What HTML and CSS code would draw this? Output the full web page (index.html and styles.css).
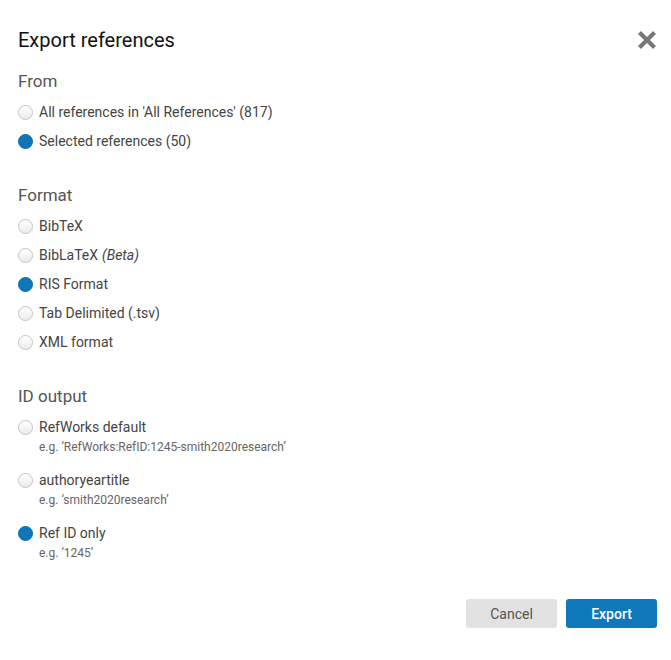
FILE: index.html
```html
<!DOCTYPE html>
<html lang="en">
<head>
  <meta charset="UTF-8">
  <title>Export references</title>
  <link rel="stylesheet" href="styles.css">
</head>
<body>

  <div class="dialog">
    <div class="dialog-header">
      <h2>Export references</h2>
      <button class="close-btn" aria-label="Close">
        <svg width="20" height="20" viewBox="0 0 20 20">
          <path d="M2.5 2.5 L17.5 17.5 M17.5 2.5 L2.5 17.5" stroke="#777" stroke-width="4.2" stroke-linecap="butt"/>
        </svg>
      </button>
    </div>

    <div class="section">
      <h3>From</h3>
      <label class="option"><input type="radio" name="from"> All references in 'All References' (817)</label>
      <label class="option"><input type="radio" name="from" checked> Selected references (50)</label>
    </div>

    <div class="section">
      <h3>Format</h3>
      <label class="option"><input type="radio" name="format"> BibTeX</label>
      <label class="option"><input type="radio" name="format"> BibLaTeX <em>(Beta)</em></label>
      <label class="option"><input type="radio" name="format" checked> RIS Format</label>
      <label class="option"><input type="radio" name="format"> Tab Delimited (.tsv)</label>
      <label class="option"><input type="radio" name="format"> XML format</label>
    </div>

    <div class="section">
      <h3>ID output</h3>
      <div class="option-group">
        <label class="option"><input type="radio" name="idout"> RefWorks default</label>
        <div class="hint">e.g. ‘RefWorks:RefID:1245-smith2020research’</div>
      </div>
      <div class="option-group">
        <label class="option"><input type="radio" name="idout"> authoryeartitle</label>
        <div class="hint">e.g. ‘smith2020research’</div>
      </div>
      <div class="option-group">
        <label class="option"><input type="radio" name="idout" checked> Ref ID only</label>
        <div class="hint">e.g. ‘1245’</div>
      </div>
    </div>

    <div class="dialog-footer">
      <button class="btn btn-cancel">Cancel</button>
      <button class="btn btn-primary">Export</button>
    </div>
  </div>

</body>
</html>
```

FILE: styles.css
```css
* {
  margin: 0;
  padding: 0;
  box-sizing: border-box;
  font-family: Roboto, 'Liberation Sans', sans-serif;
}

body {
  background: #ffffff;
}

.dialog {
  width: 671px;
  padding: 28px 14px 0 18px;
}

.dialog-header {
  display: flex;
  justify-content: space-between;
  align-items: center;
  height: 24px;
}

.dialog-header h2 {
  font-size: 20px;
  font-weight: 400;
  line-height: 24px;
  color: #111;
}

.close-btn {
  border: none;
  background: none;
  width: 20px;
  height: 20px;
  cursor: pointer;
}

.close-btn svg {
  display: block;
}

.section {
  margin-top: 17px;
}

.section + .section {
  margin-top: 27px;
}

.section h3 {
  font-size: 17px;
  font-weight: 400;
  line-height: 24px;
  color: #555;
  margin-bottom: 5px;
}

.option {
  display: flex;
  align-items: center;
  padding: 5px 0;
  line-height: 19px;
  font-size: 14px;
  color: #444;
  cursor: pointer;
}

.option em {
  margin-left: 4px;
}

.option input {
  appearance: none;
  -webkit-appearance: none;
  width: 15px;
  height: 15px;
  margin-right: 6px;
  border-radius: 50%;
  border: 1px solid #c4c4c4;
  background: linear-gradient(#ffffff, #ececec);
  flex-shrink: 0;
}

.option input:checked {
  border-color: #0b6aa8;
  background: #0f77b8;
}

.option-group {
  margin-bottom: 11px;
}

.option-group .option {
  padding-bottom: 0;
}

.hint {
  font-size: 12px;
  line-height: 16px;
  color: #666;
  margin-top: 2px;
  padding-left: 21px;
}

.dialog-footer {
  display: flex;
  justify-content: flex-end;
  gap: 9px;
  margin-top: 38px;
}

.btn {
  width: 91px;
  height: 29px;
  border: none;
  border-radius: 3px;
  font-size: 14px;
  cursor: pointer;
}

.btn-cancel {
  background: #e2e2e2;
  color: #555;
}

.btn-primary {
  background: #0f78bb;
  color: #fff;
  font-weight: 500;
}
```
